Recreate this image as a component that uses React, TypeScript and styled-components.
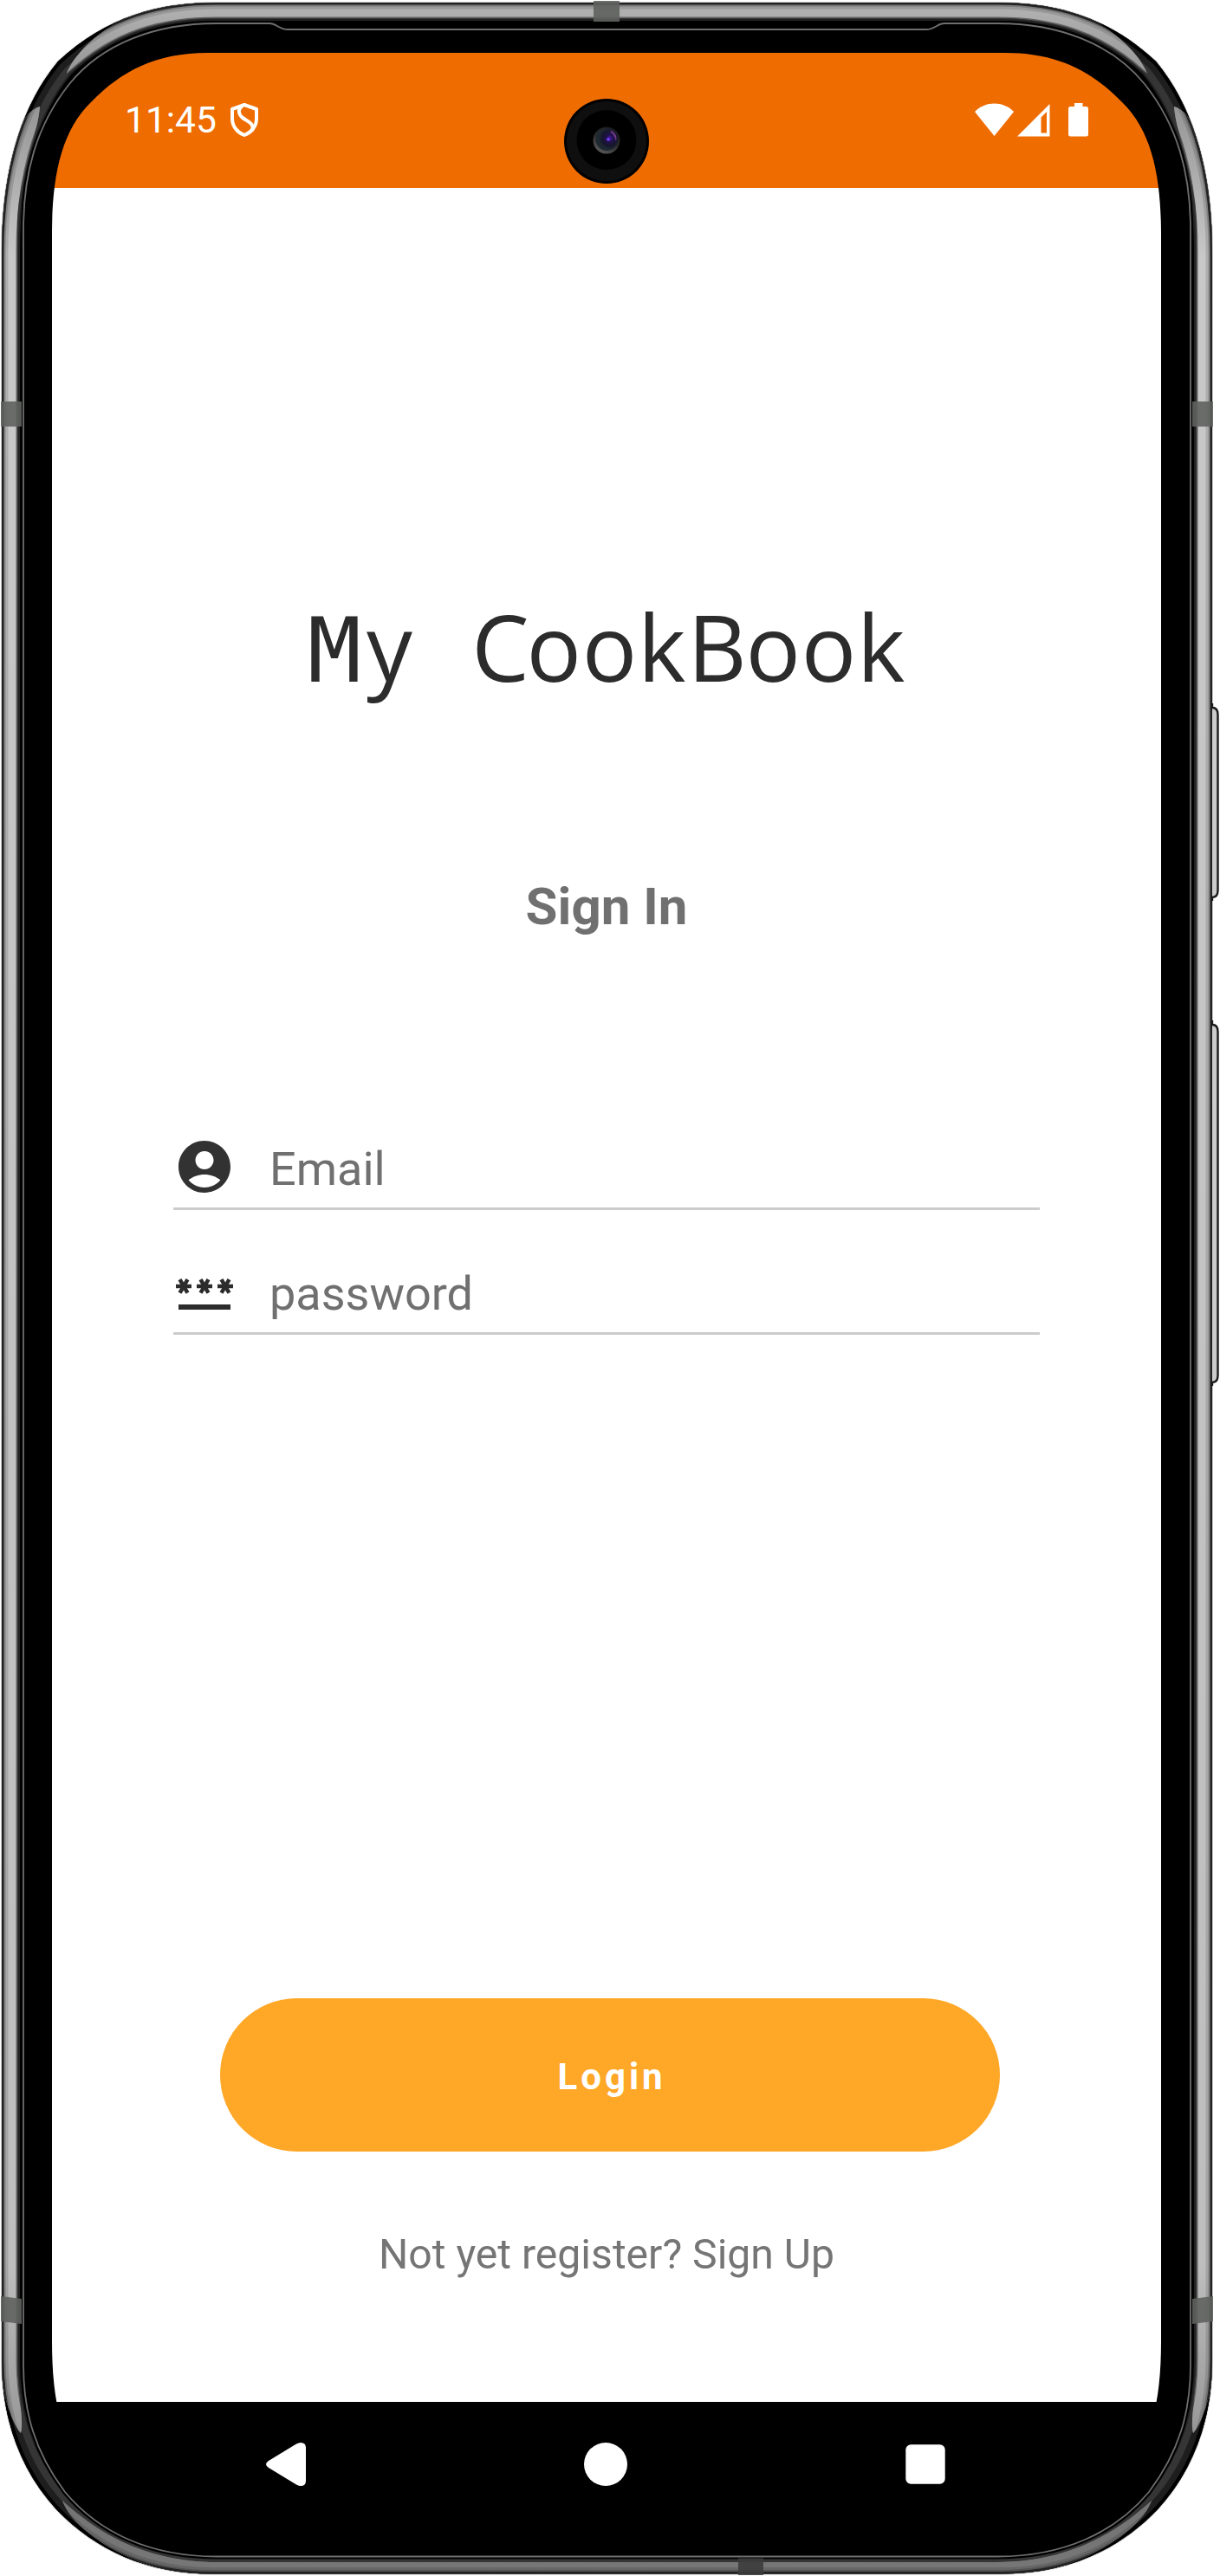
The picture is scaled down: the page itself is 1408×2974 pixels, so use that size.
import React from 'react';
import styled, { createGlobalStyle } from 'styled-components';

const GlobalStyle = createGlobalStyle`
  body { margin: 0; background: #fff; }
`;

const Phone = styled.div`
  position: relative;
  box-sizing: border-box;
  width: 1408px;
  height: 2974px;
  padding: 61px 68px 0 60px;
  overflow: hidden;
  font-family: Roboto, sans-serif;
`;

const Chassis = styled.svg`
  position: absolute;
  top: 0;
  left: 0;
`;

const Screen = styled.div`
  position: relative;
  display: flex;
  flex-direction: column;
  width: 1280px;
  height: 2852px;
  background: #000;
  clip-path: path('M0 210C0 144 10 91 45 57C80 21 120 0 180 0H1100C1160 0 1200 21 1235 57C1270 91 1280 144 1280 210V2642C1280 2708 1270 2761 1235 2795C1200 2831 1160 2852 1100 2852H180C120 2852 80 2831 45 2795C10 2761 0 2708 0 2642Z');
`;

const StatusBar = styled.header`
  box-sizing: border-box;
  display: flex;
  justify-content: space-between;
  align-items: flex-start;
  height: 156px;
  padding: 52px 84px 0 84px;
  background: #ef6c00;
  color: #fff;
`;

const StatusGroup = styled.div`
  display: flex;
  align-items: flex-start;
`;

const Clock = styled.span`
  width: 118px;
  font-size: 42.5px;
  line-height: 50px;
  margin-top: 1px;
`;

const StatusIcon = styled.svg<{ $gap?: number }>`
  display: block;
  margin-left: ${(p) => p.$gap ?? 0}px;
  margin-top: 4px;
`;

const Camera = styled.svg`
  position: absolute;
  left: 591px;
  top: 53px;
`;

const Content = styled.main`
  box-sizing: border-box;
  display: flex;
  flex-direction: column;
  height: 2556px;
  padding: 469px 140px 0;
  background: #fff;
`;

const Title = styled.h1`
  margin: 0;
  padding-left: 155px;
  height: 120px;
  font: 400 105.5px/120px 'Open Sans', 'Noto Sans', sans-serif;
  font-kerning: none;
  color: #2c2c2c;
  white-space: pre;
`;

const Glyph = styled.span<{ $track: number; $mono?: boolean }>`
  letter-spacing: ${(p) => p.$track}px;
  ${(p) => p.$mono && "font-family: 'DejaVu Sans Mono', monospace; font-size: 103px;"}
`;

const Subtitle = styled.h2`
  margin: 206px 0 229px;
  font-size: 60px;
  line-height: 70px;
  font-weight: 700;
  text-align: center;
  color: #707070;
`;

const Fields = styled.div`
  display: flex;
  flex-direction: column;
  gap: 58px;
`;

const Field = styled.label`
  display: flex;
  gap: 39px;
  height: 83px;
  border-bottom: 3px solid #ccc;
`;

const FieldText = styled.span`
  padding-top: 8px;
  font-size: 54px;
  line-height: 62px;
  color: #707070;
`;

const LoginButton = styled.button`
  margin: 766px 0 0 54px;
  width: 900px;
  height: 177px;
  padding: 4px 0 0 4px;
  border: 0;
  border-radius: 89px;
  background: #ffa726;
  color: #fff;
  font: 700 42px/50px Roboto, sans-serif;
  letter-spacing: 4px;
`;

const Footer = styled.p`
  margin: 91px 0 0;
  font-size: 48.1px;
  line-height: 56px;
  text-align: center;
  color: #757575;
`;

const NavBar = styled.nav`
  display: flex;
  justify-content: space-between;
  padding: 47px 249px 0 247px;
`;

const outer =
  'M2 290C2 212 18 130 67 71C124 18 185 3 250 3H1151C1216 3 1277 18 1334 71C1383 130 1399 212 1399 290V2725C1399 2790 1379 2850 1336 2897C1291 2944 1231 2971.5 1156 2971.5H245C170 2971.5 110 2944 65 2897C22 2850 2 2790 2 2725Z';
const inner =
  'M27 265C27 200 42 145 80 97C118 50 180 27 250 27H311C319 27 322 34 332 34H1069C1079 34 1082 27 1090 27H1151C1221 27 1283 50 1321 97C1359 145 1374 200 1374 265V2730C1374 2785 1361 2830 1326 2877C1286 2925 1226 2951.5 1151 2951.5H250C175 2951.5 115 2925 75 2877C40 2830 27 2785 27 2730Z';

const PhoneFrame = () => (
  <Chassis width="1408" height="2974" viewBox="0 0 1408 2974">
    <defs>
      <clipPath id="body"><path d={outer} /></clipPath>
      <clipPath id="shine">
        <path d="M77 85C85 62 135 0 245 0H1156C1266 0 1316 62 1324 85C1290 60 1245 21 1150 21H251C156 21 111 60 77 85Z" />
        <path d="M46 123C20 130 0 190 0 260V2720C0 2760 15 2800 24 2809C28 2795 20 2760 20 2720V260C20 210 45 150 46 123Z" />
        <path d="M1355 123C1381 130 1401 190 1401 260V2720C1401 2760 1386 2800 1377 2809C1373 2795 1381 2760 1381 2720V260C1381 210 1356 150 1355 123Z" />
        <path d="M72 2887C85 2925 165 2974 245 2974H1156C1236 2974 1316 2925 1329 2887C1295 2918 1240 2958 1150 2958H251C161 2958 106 2918 72 2887Z" />
      </clipPath>
      <linearGradient id="metal" gradientUnits="userSpaceOnUse" x1="0" y1="0" x2="0" y2="2974">
        <stop offset="0" stopColor="#b4b4b4" />
        <stop offset=".035" stopColor="#909090" />
        <stop offset=".1" stopColor="#c8c8c8" />
        <stop offset=".88" stopColor="#bebebe" />
        <stop offset=".94" stopColor="#9a9a9a" />
        <stop offset=".965" stopColor="#737373" />
        <stop offset="1" stopColor="#777" />
      </linearGradient>
    </defs>
    <path d={outer} fill="#000" stroke="#ccc" strokeWidth="2" />
    <g clipPath="url(#body)" fill="none">
      <path d={outer} stroke="#222" strokeWidth="42" />
      <path d={outer} stroke="#353535" strokeWidth="38" />
      <path d={outer} stroke="#1e1e1e" strokeWidth="22" />
      <path d={outer} stroke="#000" strokeWidth="8" />
      <g clipPath="url(#shine)">
        <path d={outer} stroke="#606060" strokeWidth="36" />
        <path d={outer} stroke="url(#metal)" strokeWidth="33" />
        <path d={outer} stroke="#000" strokeOpacity=".13" strokeWidth="15" />
        <path d={outer} stroke="#000" strokeOpacity=".2" strokeWidth="9" />
        <path d={outer} stroke="#222" strokeWidth="5" />
      </g>
    </g>
    <path d={inner} fill="#000" stroke="#000" strokeWidth="6" />
    <path d={inner} fill="#000" stroke="#6e6e6e" strokeWidth="1.8" />
    <g fill="#5f625f" fillOpacity=".9">
      <path d="M685 1H715V25H685Z" />
      <path d="M1 463.5H25V492.5H1ZM1376 463.5H1400V492.5H1376Z" />
      <path d="M1 2651L25 2654V2683L1 2680ZM1400 2651L1376 2654V2683L1400 2680Z" />
      <path d="M852 2953.5H881V2973H852Z" fill="#3c3c3c" />
    </g>
    <g fill="#ccc" stroke="#1a1a1a" strokeWidth="2.4">
      <path d="M1399 812V817Q1405.500 817 1405.500 825V1028Q1405.500 1036 1399 1036V1040" />
      <path d="M1399 1178V1183Q1405.500 1183 1405.500 1191V1588Q1405.500 1596 1399 1596V1600" />
    </g>
  </Chassis>
);

export default function App() {
  return (
    <Phone>
      <GlobalStyle />
      <PhoneFrame />
      <Screen>
        <StatusBar>
          <StatusGroup>
            <Clock>11:45</Clock>
            <StatusIcon $gap={3} width="34" height="42" viewBox="0 0 34 42" fill="none" stroke="#fff" strokeWidth="4" strokeLinejoin="round">
              <path d="M17 4L31 9V20C31 29 25 36 17 39C9 36 3 29 3 20V9Z" />
              <path d="M15 5C9 9 10 15 15 19C22 24 29 26 26 34" />
            </StatusIcon>
          </StatusGroup>
          <StatusGroup>
            <StatusIcon width="45" height="42" viewBox="0 0 45 42" fill="#fff">
              <path d="M0 12C12 -.7 33 -.7 45 12L22.500 40Z" />
            </StatusIcon>
            <StatusIcon $gap={4} width="38" height="42" viewBox="0 0 38 42" fill="#fff" fillRule="evenodd">
              <path d="M37.500 3V40.500H0ZM34 12L27.500 18.500V36.500H34Z" />
            </StatusIcon>
            <StatusIcon $gap={21} width="23" height="42" viewBox="0 0 23 42" fill="#fff">
              <path d="M7 2H16.500V6H20.500Q23 6 23 8.500V38Q23 40.500 20.500 40.500H2.500Q0 40.500 0 38V8.500Q0 6 2.500 6H7Z" />
            </StatusIcon>
          </StatusGroup>
        </StatusBar>
        <Content>
          <Title>
            <Glyph $mono $track={6}>M</Glyph>
            <Glyph $track={0}>y</Glyph>
            <Glyph $track={41}> </Glyph>
            <Glyph $track={-3.2}>C</Glyph>
            <Glyph $track={0.7}>oo</Glyph>
            <Glyph $track={2.2}>k</Glyph>
            <Glyph $track={-1.2}>B</Glyph>
            <Glyph $track={0.8}>oo</Glyph>
            <Glyph $track={0}>k</Glyph>
          </Title>
          <Subtitle>Sign In</Subtitle>
          <Fields>
            <Field>
              <svg width="72" height="72" viewBox="0 0 24 24" fill="#323232">
                <path d="M12 2C6.480 2 2 6.480 2 12s4.480 10 10 10 10-4.480 10-10S17.520 2 12 2zm0 4c1.930 0 3.500 1.570 3.500 3.500S13.930 13 12 13s-3.500-1.570-3.500-3.500S10.070 6 12 6zm0 14c-2.030 0-4.430-.820-6.140-2.880C7.550 15.800 9.680 15 12 15s4.450.800 6.140 2.120C16.430 19.180 14.030 20 12 20z" />
              </svg>
              <FieldText>Email</FieldText>
            </Field>
            <Field>
              <svg width="72" height="72" viewBox="0 0 24 24" fill="#2c2c2c">
                <path d="M2 17h20v2H2v-2zm1.150-4.050L4 11.470l.850 1.480 1.300-.750-.850-1.480H7v-1.500H5.300l.850-1.470L4.850 7 4 8.470 3.150 7l-1.300.750.850 1.470H1v1.500h1.700l-.850 1.480 1.300.750zm6.700-.750l1.300.750.850-1.480.850 1.480 1.300-.750-.850-1.480H15v-1.500h-1.700l.850-1.470-1.300-.750L12 8.470 11.150 7l-1.300.750.850 1.470H9v1.500h1.700l-.850 1.480zM23 9.220h-1.700l.850-1.470-1.300-.750L20 8.470 19.150 7l-1.300.750.850 1.470H17v1.500h1.700l-.850 1.480 1.300.750.850-1.480.850 1.480 1.300-.750-.850-1.480H23v-1.500z" />
              </svg>
              <FieldText>password</FieldText>
            </Field>
          </Fields>
          <LoginButton>Login</LoginButton>
          <Footer>Not yet register? Sign Up</Footer>
        </Content>
        <NavBar>
          <svg width="46" height="50" viewBox="0 0 46 50" fill="#fff">
            <path d="M35 1.500Q38 0 40 0Q46 0 46 6V44Q46 50 40 50Q38 50 35 48.500L3 29Q-3 25 3 21Z" />
          </svg>
          <svg width="50" height="50" viewBox="0 0 50 50" fill="#fff"><circle cx="25" cy="25" r="25" /></svg>
          <svg width="46" height="50" viewBox="0 0 46 50" fill="#fff"><rect x=".3" y="2.200" width="45.400" height="45.600" rx="6" /></svg>
        </NavBar>
        <Camera width="98" height="98" viewBox="0 0 98 98">
          <defs>
            <radialGradient id="lens" cx=".62" cy=".45">
              <stop offset="0" stopColor="#4a1ca8" />
              <stop offset=".3" stopColor="#221250" />
              <stop offset=".65" stopColor="#16152c" />
              <stop offset="1" stopColor="#1e2a32" />
            </radialGradient>
            <linearGradient id="lensRing" x1=".3" y1="1" x2=".8" y2="0">
              <stop offset="0" stopColor="#5a5a5a" />
              <stop offset=".5" stopColor="#2a2a2a" />
              <stop offset="1" stopColor="#191919" />
            </linearGradient>
          </defs>
          <circle cx="49" cy="49" r="49" fill="#000" />
          <circle cx="49" cy="49" r="46" fill="#0f0f0f" />
          <circle cx="49" cy="47.500" r="34.500" fill="#000" />
          <circle cx="49" cy="48" r="15.500" fill="url(#lensRing)" />
          <circle cx="49.500" cy="47" r="13" fill="url(#lens)" />
          <path d="M55 37Q62 42 60 49Q58 41 53 38Z" fill="#a04ab0" fillOpacity=".7" />
          <circle cx="51" cy="47" r="1.800" fill="#7a40ff" />
        </Camera>
      </Screen>
    </Phone>
  );
}
